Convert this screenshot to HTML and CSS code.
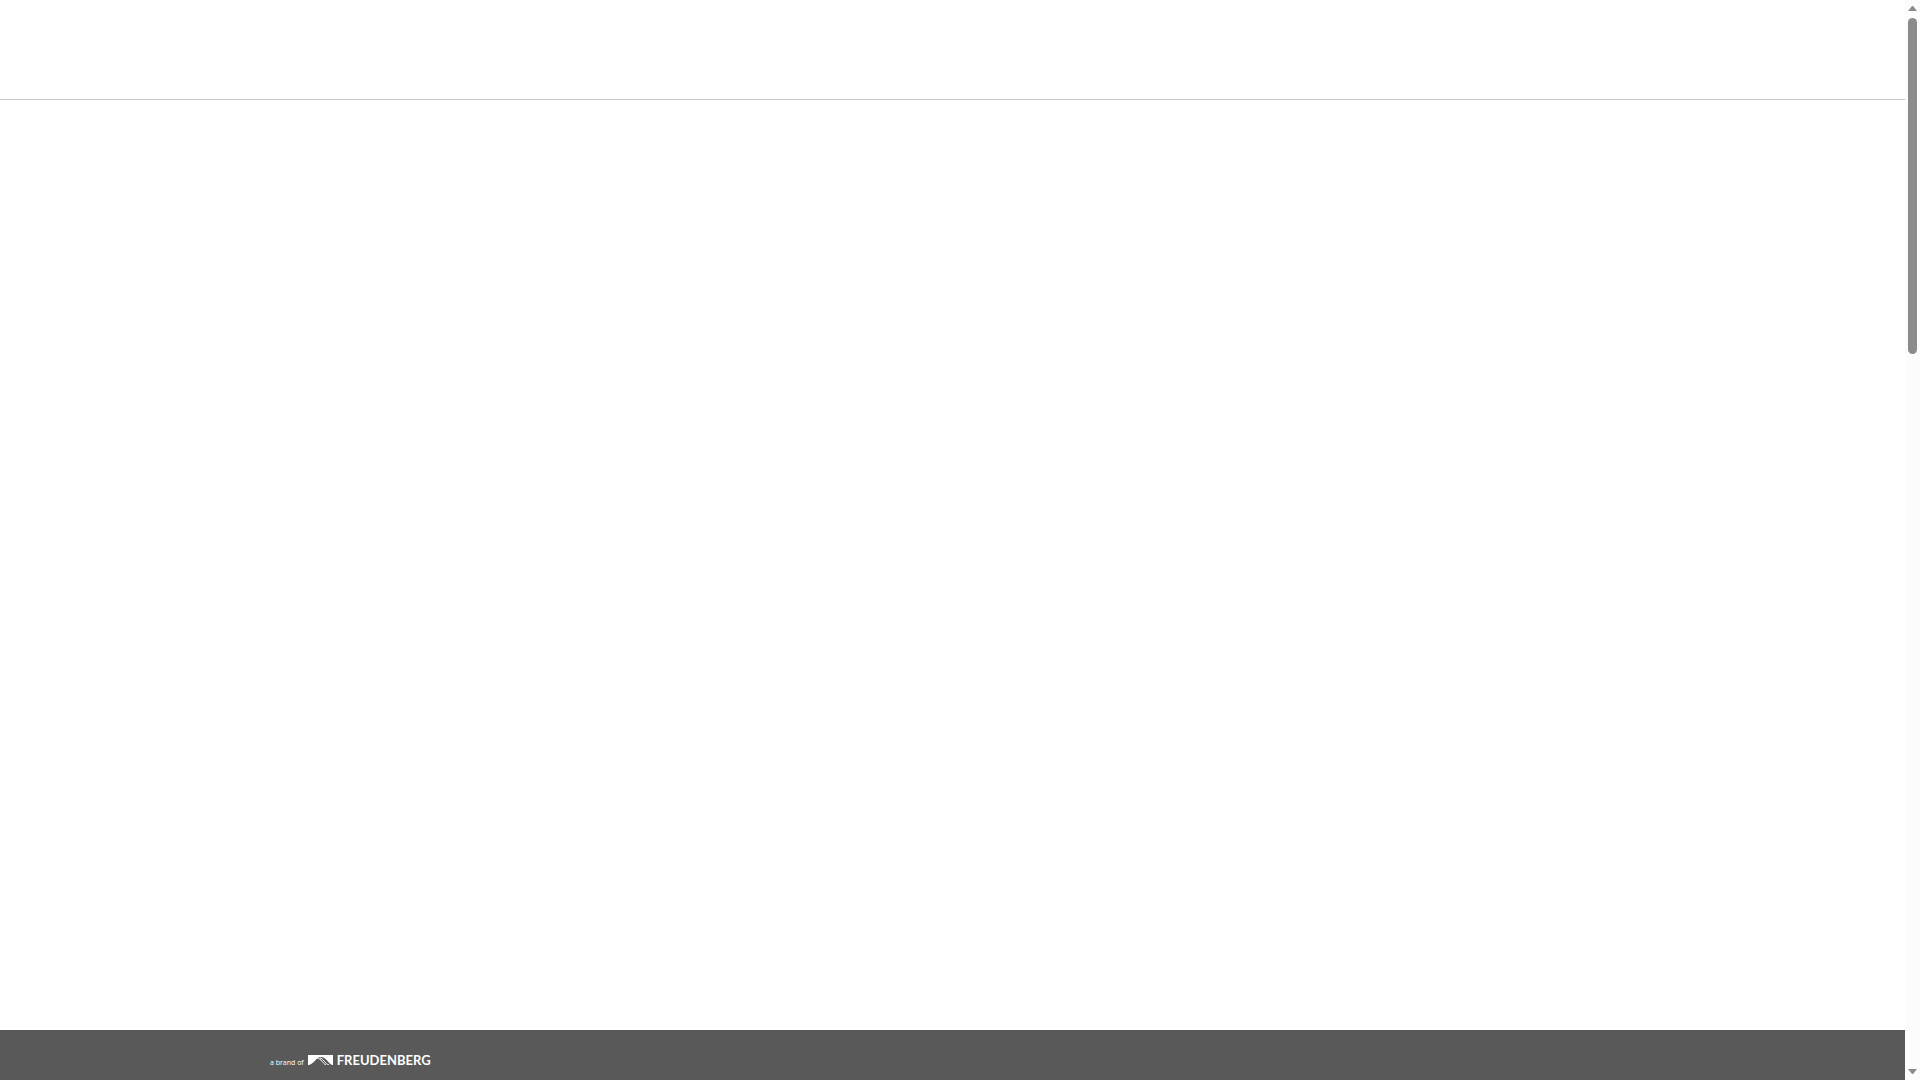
FILE: index.html
```
<!DOCTYPE html>
<html lang="en">
<head>
    <meta charset="UTF-8">
    <meta name="viewport" content="width=device-width, initial-scale=1.0">
    <title>Freudenberg</title>
    <link rel="stylesheet" href="styles.css">
</head>
<body>

    <div class="page">
        <header class="header"></header>
        <main class="content"></main>
        <footer class="footer">
            <a class="brand" href="#">
                <span class="brand-claim">a brand of</span>
                <svg class="brand-logo" width="25" height="10" viewBox="0 0 25 10" aria-hidden="true">
                    <path fill="#fff" d="M0 0H25V10H24C20 8 18 2 13 2C8 2 6 9 1 10H0Z"/>
                    <path fill="none" stroke="#fff" stroke-width="1" d="M9.500 3.500C13 3 15 9 18 10M12 3C15 3 17 9 21 10"/>
                </svg>
                <span class="brand-name">FREUDENBERG</span>
            </a>
        </footer>
    </div>

    <!-- Scrollbar -->
    <div class="scrollbar" aria-hidden="true">
        <svg width="9" height="5" viewBox="0 0 9 5"><path fill="#8b8b8b" d="M4 0H5L9 5H0Z"/></svg>
        <div class="scrollbar-track">
            <div class="scrollbar-thumb"></div>
        </div>
        <svg width="9" height="5" viewBox="0 0 9 5"><path fill="#8b8b8b" d="M0 0H9L5 5H4Z"/></svg>
    </div>

</body>
</html>
```
FILE: styles.css
```
body {
    display: flex;
    min-height: 100vh;
    margin: 0;
    background: #fff;
    font-family: Lato, "Open Sans", sans-serif;
}
.page {
    display: flex;
    flex: 1;
    flex-direction: column;
}
.header {
    height: 99px;
    border-bottom: 1px solid #c8c8cc;
}
.content {
    flex: 1;
}
.footer {
    padding: 20px 270px 7px;
    background: #595959;
}
.brand {
    display: inline-flex;
    align-items: baseline;
    gap: 4px;
    color: #fff;
    line-height: 20px;
    text-decoration: none;
    vertical-align: top;
}
.brand-claim {
    font-family: "Open Sans", sans-serif;
    font-size: 7px;
}
.brand-name {
    font-size: 13px;
    font-weight: bold;
}
.scrollbar {
    display: flex;
    flex-direction: column;
    align-items: center;
    box-sizing: border-box;
    width: 15px;
    padding: 6px 0;
    background: #fcfcfc;
}
.scrollbar-track {
    flex: 1;
    padding: 7px 0;
}
.scrollbar-thumb {
    width: 9px;
    height: 32.2%;
    min-height: 336px;
    border-radius: 5px;
    background: #8b8b8b;
}
```
